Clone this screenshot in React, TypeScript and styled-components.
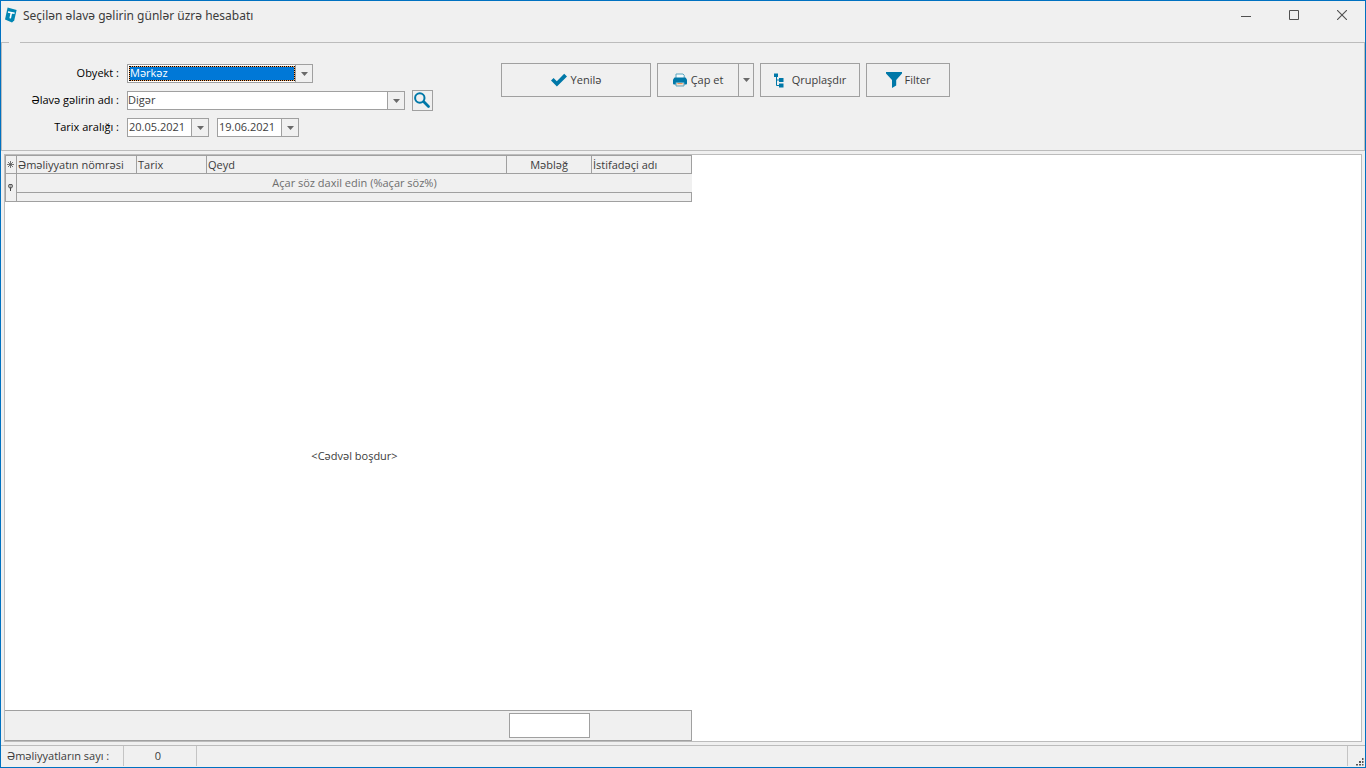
import React, { useRef } from "react";
import styled, { createGlobalStyle, css } from "styled-components";

const colors = {
  face: "#f0f0f0",
  line: "#a0a0a0",
  soft: "#bcbcbc",
  accent: "#0078a8",
  frame: "#0071c1",
  text: "#3c3c3c",
};

const GlobalStyle = createGlobalStyle`
  *, *::before, *::after { box-sizing: border-box; }
  body { margin: 0; background: ${colors.face}; }
  body, button, input, select, table {
    font-family: "Open Sans", "Noto Sans", sans-serif;
    font-size: 11px;
    line-height: 16px;
    color: ${colors.text};
  }
  button, input, select { margin: 0; padding: 0; border: 0; border-radius: 0; background: none; }
  svg { display: block; flex: none; }
`;

const Window = styled.div`
  display: flex;
  flex-direction: column;
  min-height: 100vh;
  border: 1px solid ${colors.frame};
  background: ${colors.face};
`;

const TitleBar = styled.header`
  display: flex;
  align-items: center;
  height: 28px;
  margin-bottom: 13px;
  padding-left: 4px;
`;

const Title = styled.h1`
  flex: 1;
  margin: 0 0 0 6px;
  padding-top: 2px;
  font-family: "Noto Sans", sans-serif;
  font-size: 12px;
  line-height: 16px;
  font-weight: 400;
`;

const CaptionButton = styled.button`
  display: flex;
  align-items: center;
  justify-content: center;
  width: 48px;
  height: 28px;
  padding-left: 2px;
`;

const FilterGroup = styled.fieldset`
  display: block;
  margin: 0;
  padding: 0;
  border: 1px solid ${colors.soft};
  min-width: 0;
`;

const GroupNotch = styled.legend`
  width: 11px;
  height: 1px;
  margin-left: 7px;
  padding: 0;
`;

const FilterBody = styled.div`
  display: flex;
  align-items: flex-start;
  padding: 20px 8px 13px 0;
`;

const Fields = styled.div`
  display: grid;
  grid-template-columns: 117px auto;
  grid-auto-rows: 19px;
  gap: 8px;
  width: 499px;
  padding-top: 1px;
`;

const FieldLabel = styled.label`
  line-height: 18px;
  text-align: right;
  color: #000;
`;

const FieldRow = styled.div<{ $gap: number }>`
  display: flex;
  align-items: center;
  gap: ${(p) => p.$gap}px;
`;

const Combo = styled.div<{ $width: number }>`
  display: flex;
  width: ${(p) => p.$width}px;
  height: 19px;
  border: 1px solid ${colors.line};
  background: #fff;
`;

const control = css`
  flex: 1;
  min-width: 0;
  height: 17px;
  padding-bottom: 1px;
  appearance: none;
  outline: none;
`;

const ComboSelect = styled.select<{ $active?: boolean }>`
  ${control}
  ${(p) =>
    p.$active &&
    css`
      height: 15px;
      line-height: 12px;
      margin: 1px 0 1px 1px;
      border: 1px dotted #000;
      color: #fff;
      background: linear-gradient(#0078d7, #0078d7) padding-box, linear-gradient(#ffa860, #ffa860) border-box;
      option {
        color: #000;
      }
    `}
`;

const DateInput = styled.input`
  ${control}
  padding: 0 0 2px 1px;
`;

const DropButton = styled.button<{ $width?: number }>`
  display: flex;
  align-items: center;
  justify-content: center;
  width: ${(p) => p.$width ?? 17}px;
  border-left: 1px solid ${colors.line};
  background: ${colors.face};
`;

const SearchButton = styled.button`
  display: flex;
  align-items: center;
  justify-content: center;
  width: 21px;
  height: 21px;
  border: 1px solid ${colors.line};
`;

const Toolbar = styled.div`
  display: flex;
  gap: 6px;
`;

const ToolButton = styled.button<{ $width: number; $gap: number }>`
  display: flex;
  align-items: center;
  justify-content: center;
  gap: ${(p) => p.$gap}px;
  width: ${(p) => p.$width}px;
  height: 34px;
  border: 1px solid ${colors.line};
`;

const SplitButton = styled.div`
  display: flex;
  border: 1px solid ${colors.line};

  ${ToolButton} {
    height: 32px;
    border: 0;
  }
`;

const ResultPanel = styled.main`
  flex: 1;
  display: flex;
  flex-direction: column;
  align-items: flex-start;
  margin: 3px;
  border: 1px solid ${colors.soft};
  background: #fff;
`;

const Table = styled.table`
  table-layout: fixed;
  width: 687px;
  border-collapse: separate;
  border-spacing: 0;
  border: solid ${colors.line};
  border-width: 1px 0 0 1px;
  background: ${colors.face};
`;

const Cell = styled.td<{ $height?: number; $align?: string; $open?: boolean }>`
  height: ${(p) => p.$height ?? 18}px;
  padding: 0 1px;
  border: solid ${colors.line};
  border-width: 0 ${(p) => (p.$open ? 0 : 1)}px 1px 0;
  font-weight: 400;
  line-height: 16px;
  text-align: ${(p) => p.$align ?? "left"};
  white-space: nowrap;
`;

const MarkerCell = styled(Cell)`
  padding: 0 1px 0 0;

  svg {
    margin: 0 auto;
  }
`;

const Hint = styled.span`
  color: #6e6e6e;
`;

const EmptyMessage = styled.div`
  flex: 1;
  display: flex;
  align-items: center;
  justify-content: center;
  width: 687px;
  padding-left: 12px;
`;

const Summary = styled.div`
  display: flex;
  align-items: center;
  justify-content: flex-end;
  width: 687px;
  height: 31px;
  padding-right: 101px;
  border: solid ${colors.line};
  border-width: 1px 1px 1px 0;
  background: ${colors.face};
`;

const SummaryBox = styled.output`
  width: 81px;
  height: 25px;
  border: 1px solid ${colors.line};
  background: #fff;
`;

const StatusBar = styled.footer`
  display: flex;
  height: 22px;
  padding-bottom: 1px;
  border-top: 1px solid ${colors.soft};
`;

const StatusCell = styled.div<{ $width?: number; $center?: boolean }>`
  display: flex;
  align-items: center;
  justify-content: ${(p) => (p.$center ? "center" : "flex-start")};
  flex: ${(p) => (p.$width ? "none" : 1)};
  width: ${(p) => (p.$width ? `${p.$width}px` : "auto")};
  padding: 0 4px 0 ${(p) => (p.$center ? 0 : 6)}px;
  border-right: 1px solid #c4c4c4;
`;

const GripCell = styled.div`
  display: flex;
  align-items: flex-end;
  justify-content: flex-end;
  width: 17px;
  padding-right: 1px;
`;

const Arrow = () => (
  <svg width="7" height="4" viewBox="0 0 7 4" aria-hidden="true">
    <path d="M0 0h7L3.5 4z" fill="#6a6a6a" />
  </svg>
);

const AppIcon = () => (
  <svg width="12" height="16" viewBox="0 0 12 16" aria-hidden="true">
    <path d="M2.6 .4 11.6 3 9.2 13.6 7 15.6 0 12.4z" fill="#0086b3" />
    <path d="M3 5 9.6 6.200M6.400 5.600 5.200 11.400" stroke="#fff" strokeWidth="1.600" fill="none" />
  </svg>
);

const SearchIcon = () => (
  <svg width="17" height="17" viewBox="0 0 17 17" aria-hidden="true">
    <circle cx="5.8" cy="6" r="4.7" fill="none" stroke={colors.accent} strokeWidth="2" />
    <path d="m9.8 9.8 4.7 4.7" stroke={colors.accent} strokeWidth="2.8" strokeLinecap="round" />
  </svg>
);

const CheckIcon = () => (
  <svg width="16" height="14" viewBox="0 0 16 14" aria-hidden="true">
    <path d="M0 7.6 2.6 5l3.2 3.2L13.2.8 16 3.4 5.9 13.4z" fill={colors.accent} />
  </svg>
);

const PrinterIcon = () => (
  <svg width="14" height="14" viewBox="0 0 14 14" aria-hidden="true">
    <path d="M3 5V1h7l1.2 1.2V5" fill="#f4fafc" stroke="#5aa6c0" />
    <path d="M1.5 4.5h11L14 6.5v4a1 1 0 0 1-1 1H1a1 1 0 0 1-1-1v-4z" fill={colors.accent} />
    <path d="M3 9.5h8V13H3z" fill="#f3dccb" stroke="#5aa6c0" />
    <path d="M4.5 10.5h5" stroke="#e8935a" />
  </svg>
);

const TreeIcon = () => (
  <svg width="10" height="15" viewBox="0 0 10 15" aria-hidden="true">
    <path d="M0 .5h4V4H0zM5 5h4.5v4H5zM5 10.5h4.5v4H5z" fill={colors.accent} />
    <path d="M2.5 4v8.5H6M2.5 7H6" stroke={colors.accent} fill="none" />
  </svg>
);

const FunnelIcon = () => (
  <svg width="16" height="16" viewBox="0 0 16 16" aria-hidden="true">
    <path d="M0 0h16v1.5L10.2 8v5.5L6 16V8L0 1.5z" fill={colors.accent} />
  </svg>
);

const MinimizeIcon = () => (
  <svg width="10" height="10" viewBox="0 0 10 10" aria-hidden="true">
    <path d="M0 6.5h10" stroke="#505050" />
  </svg>
);

const MaximizeIcon = () => (
  <svg width="10" height="10" viewBox="0 0 10 10" aria-hidden="true">
    <path d="M.5.5h9v9h-9z" stroke="#505050" fill="none" />
  </svg>
);

const CloseIcon = () => (
  <svg width="10" height="10" viewBox="0 0 10 10" aria-hidden="true">
    <path d="m0 0 10 10M10 0 0 10" stroke="#505050" strokeWidth="1.1" />
  </svg>
);

const StarIcon = () => (
  <svg width="7" height="7" viewBox="0 0 7 7" aria-hidden="true">
    <path d="M3.5 0v7M0 3.5h7M1 1l5 5M6 1 1 6" stroke="#555" strokeWidth=".8" />
  </svg>
);

const PinIcon = () => (
  <svg width="5" height="7" viewBox="0 0 5 7" aria-hidden="true">
    <path d="M1 .5h3l.5 1v1L3.5 4h-2L.5 2.5v-1z" fill="#aaa" stroke="#555" />
    <path d="M2.5 3.5V7" stroke="#444" />
  </svg>
);

const Grip = () => (
  <svg width="8" height="8" viewBox="0 0 8 8" aria-hidden="true">
    <path d="M6 0h1.5v2H6zM3 3h2v2H3zM6 3h1.5v2H6zM0 6h2v1.5H0zM3 6h2v1.5H3zM6 6h1.5v1.5H6z" fill="#555" />
  </svg>
);

type ComboBoxProps = { id: string; width: number; options: string[]; active?: boolean };

function ComboBox({ id, width, options, active }: ComboBoxProps) {
  const ref = useRef<HTMLSelectElement>(null);
  return (
    <Combo $width={width}>
      <ComboSelect id={id} ref={ref} $active={active}>
        {options.map((o) => (
          <option key={o}>{o}</option>
        ))}
      </ComboSelect>
      <DropButton type="button" aria-label="Siyahını aç" onClick={() => ref.current?.showPicker()}>
        <Arrow />
      </DropButton>
    </Combo>
  );
}

function DateBox({ id, value, label }: { id: string; value: string; label?: string }) {
  return (
    <Combo $width={82}>
      <DateInput id={id} type="text" defaultValue={value} aria-label={label} />
      <DropButton type="button" aria-label="Təqvimi aç">
        <Arrow />
      </DropButton>
    </Combo>
  );
}

const columns = [
  { name: "Əməliyyatın nömrəsi", width: 120 },
  { name: "Tarix", width: 70 },
  { name: "Qeyd", width: 300 },
  { name: "Məbləğ", width: 85, align: "center" },
  { name: "İstifadəçi adı", width: 100 },
];

export default function App() {
  return (
    <>
      <GlobalStyle />
      <Window>
        <TitleBar>
          <AppIcon />
          <Title>Seçilən əlavə gəlirin günlər üzrə hesabatı</Title>
          <CaptionButton type="button" aria-label="Kiçilt">
            <MinimizeIcon />
          </CaptionButton>
          <CaptionButton type="button" aria-label="Böyüt">
            <MaximizeIcon />
          </CaptionButton>
          <CaptionButton type="button" aria-label="Bağla">
            <CloseIcon />
          </CaptionButton>
        </TitleBar>

        <FilterGroup aria-label="Hesabat parametrləri">
          <GroupNotch />
          <FilterBody>
            <Fields>
              <FieldLabel htmlFor="object">Obyekt :</FieldLabel>
              <FieldRow $gap={7}>
                <ComboBox id="object" width={186} options={["Mərkəz"]} active />
              </FieldRow>
              <FieldLabel htmlFor="income">Əlavə gəlirin adı :</FieldLabel>
              <FieldRow $gap={7}>
                <ComboBox id="income" width={278} options={["Digər"]} />
                <SearchButton type="button" aria-label="Axtar">
                  <SearchIcon />
                </SearchButton>
              </FieldRow>
              <FieldLabel htmlFor="from">Tarix aralığı :</FieldLabel>
              <FieldRow $gap={8}>
                <DateBox id="from" value="20.05.2021" />
                <DateBox id="to" value="19.06.2021" label="Son tarix" />
              </FieldRow>
            </Fields>
            <Toolbar>
              <ToolButton type="button" $width={150} $gap={4}>
                <CheckIcon />
                Yenilə
              </ToolButton>
              <SplitButton>
                <ToolButton type="button" $width={80} $gap={4}>
                  <PrinterIcon />
                  Çap et
                </ToolButton>
                <DropButton type="button" aria-label="Çap seçimləri" $width={15}>
                  <Arrow />
                </DropButton>
              </SplitButton>
              <ToolButton type="button" $width={100} $gap={8}>
                <TreeIcon />
                Qruplaşdır
              </ToolButton>
              <ToolButton type="button" $width={84} $gap={3}>
                <FunnelIcon />
                Filter
              </ToolButton>
            </Toolbar>
          </FilterBody>
        </FilterGroup>

        <ResultPanel>
          <Table>
            <colgroup>
              <col width={11} />
              {columns.map((c) => (
                <col key={c.name} width={c.width} />
              ))}
            </colgroup>
            <thead>
              <tr>
                <MarkerCell>
                  <StarIcon />
                </MarkerCell>
                {columns.map((c) => (
                  <Cell as="th" scope="col" key={c.name} $align={c.align}>
                    {c.name}
                  </Cell>
                ))}
              </tr>
            </thead>
            <tbody>
              <tr>
                <MarkerCell rowSpan={2}>
                  <PinIcon />
                </MarkerCell>
                <Cell colSpan={5} $height={19} $align="center" $open>
                  <Hint>Açar söz daxil edin (%açar söz%)</Hint>
                </Cell>
              </tr>
              <tr>
                <Cell colSpan={5} $height={9} />
              </tr>
            </tbody>
          </Table>
          <EmptyMessage>&lt;Cədvəl boşdur&gt;</EmptyMessage>
          <Summary>
            <SummaryBox aria-label="Cəmi məbləğ" />
          </Summary>
        </ResultPanel>

        <StatusBar>
          <StatusCell $width={123}>Əməliyyatların sayı :</StatusCell>
          <StatusCell $width={73} $center>
            0
          </StatusCell>
          <StatusCell />
          <GripCell>
            <Grip />
          </GripCell>
        </StatusBar>
      </Window>
    </>
  );
}
